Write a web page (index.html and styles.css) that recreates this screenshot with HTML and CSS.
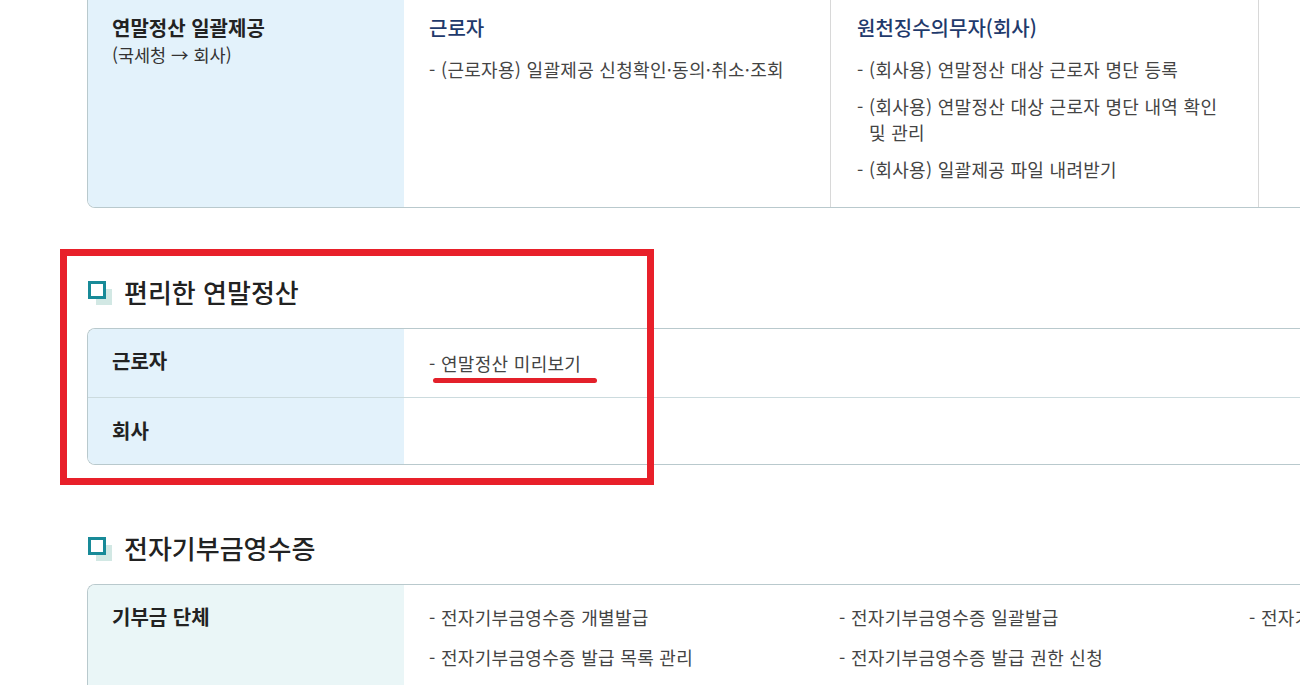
FILE: index.html
```html
<!DOCTYPE html>
<html lang="ko">
<head>
<meta charset="utf-8">
<title>연말정산</title>
<link rel="stylesheet" href="styles.css">
</head>
<body>
<div class="page">
  <div class="tbl tbl-first">
    <div class="th">
      <div class="th-title">연말정산 일괄제공</div>
      <div class="th-sub">(국세청 → 회사)</div>
    </div>
    <div class="td">
      <div class="td-head">근로자</div>
      <ul class="items">
        <li><span class="dash">-</span><span>(근로자용) 일괄제공 신청확인·동의·취소·조회</span></li>
      </ul>
    </div>
    <div class="td td-line">
      <div class="td-head">원천징수의무자(회사)</div>
      <ul class="items">
        <li><span class="dash">-</span><span>(회사용) 연말정산 대상 근로자 명단 등록</span></li>
        <li><span class="dash">-</span><span>(회사용) 연말정산 대상 근로자 명단 내역 확인 및 관리</span></li>
        <li><span class="dash">-</span><span>(회사용) 일괄제공 파일 내려받기</span></li>
      </ul>
    </div>
    <div class="td td-line"></div>
  </div>

  <section class="sec sec-marked">
    <h2 class="sec-title"><span class="sq"></span>편리한 연말정산</h2>
    <div class="tbl2">
      <div class="row">
        <div class="th2">근로자</div>
        <div class="td2">
          <ul class="items">
            <li class="marked"><span class="dash">-</span><span>연말정산 미리보기</span><span class="pen-line"></span></li>
          </ul>
        </div>
      </div>
      <div class="row">
        <div class="th2">회사</div>
        <div class="td2"></div>
      </div>
    </div>
    <div class="red-box"></div>
  </section>

  <section class="sec">
    <h2 class="sec-title"><span class="sq"></span>전자기부금영수증</h2>
    <div class="tbl3">
      <div class="th3">기부금 단체</div>
      <ul class="items grid3">
        <li><span class="dash">-</span><span>전자기부금영수증 개별발급</span></li>
        <li><span class="dash">-</span><span>전자기부금영수증 일괄발급</span></li>
        <li><span class="dash">-</span><span>전자기부금영수증 발급내역 조회</span></li>
        <li><span class="dash">-</span><span>전자기부금영수증 발급 목록 관리</span></li>
        <li><span class="dash">-</span><span>전자기부금영수증 발급 권한 신청</span></li>
      </ul>
    </div>
  </section>
</div>
</body>
</html>
```

FILE: styles.css
```css
html, body {
  margin: 0;
  padding: 0;
  overflow: hidden;
  background: #ffffff;
}

body {
  font-family: "Noto Sans CJK KR", "Noto Sans", sans-serif;
  color: #333333;
  word-break: keep-all;
}

.page {
  padding-left: 87px;
  width: 1700px;
}

ul.items {
  list-style: none;
  margin: 0;
  padding: 0;
}

ul.items li {
  display: flex;
  font-size: 18px;
  line-height: 26px;
  letter-spacing: 0.3px;
  color: #444444;
}

ul.items li + li {
  margin-top: 11px;
}

.dash {
  flex: 0 0 12px;
  width: 12px;
}

/* first table */
.tbl-first {
  display: grid;
  grid-template-columns: 316px 426px 428px 428px;
  border: 1px solid #b9c9cd;
  border-top: 0;
  border-radius: 0 0 0 8px;
  overflow: hidden;
}

.th {
  background: #e3f2fb;
  padding: 14px 24px 25px;
}

.th-title {
  font-size: 20px;
  line-height: 28px;
  font-weight: 700;
  color: #222222;
}

.th-sub {
  font-size: 17.5px;
  line-height: 26px;
  color: #333333;
}

.td {
  padding: 14px 26px 25px 25px;
}

.td-line {
  border-left: 1px solid #d8d8d8;
  padding-left: 26px;
  padding-right: 30px;
}

.td-head {
  font-size: 20px;
  line-height: 28px;
  font-weight: 500;
  color: #1f3a6c;
  margin-bottom: 14px;
}

/* sections */
.sec {
  margin-top: 66px;
}

.sec-marked {
  position: relative;
}

.sec + .sec {
  margin-top: 65px;
}

.sec-title {
  display: flex;
  align-items: center;
  margin: 0 0 18px;
  height: 36px;
  font-size: 26px;
  line-height: 36px;
  font-weight: 500;
  color: #222222;
}

.sq {
  position: relative;
  flex: 0 0 37px;
  height: 26px;
}

.sq::before {
  content: "";
  position: absolute;
  left: 9px;
  top: 10px;
  width: 16px;
  height: 16px;
  background: #d2e8e4;
}

.sq::after {
  content: "";
  position: absolute;
  left: 1px;
  top: 2px;
  width: 12px;
  height: 12px;
  border: 3px solid #188a98;
  background: #ffffff;
}

/* second table */
.tbl2 {
  border: 1px solid #b9c9cd;
  border-right: 0;
  border-radius: 8px 0 0 8px;
  overflow: hidden;
}

.row {
  display: flex;
}

.row + .row {
  border-top: 1px solid #ccdbde;
}

.th2 {
  flex: 0 0 292px;
  background: #e3f2fb;
  padding: 18px 0 0 24px;
  font-size: 20px;
  line-height: 28px;
  font-weight: 700;
  color: #222222;
  height: 50px;
}

.row + .row .th2 {
  padding-top: 19px;
  height: 47px;
}

.td2 {
  flex: 1;
  padding: 21px 25px 0;
}

li.marked {
  position: relative;
}

.pen-line {
  position: absolute;
  left: 4px;
  top: 28px;
  width: 164px;
  height: 5px;
  border-radius: 3px;
  background: #e3202a;
}

.red-box {
  position: absolute;
  left: -27px;
  top: -25px;
  width: 580px;
  height: 222px;
  border: 7px solid #e8202a;
  pointer-events: none;
}

/* third table */
.tbl3 {
  display: flex;
  border: 1px solid #b9c9cd;
  border-right: 0;
  border-bottom: 0;
  border-radius: 8px 0 0 0;
  overflow: hidden;
  min-height: 140px;
}

.th3 {
  flex: 0 0 292px;
  background: #eaf6f7;
  padding: 18px 0 0 24px;
  font-size: 20px;
  line-height: 28px;
  font-weight: 700;
  color: #222222;
}

ul.grid3 {
  display: grid;
  grid-template-columns: 410px 410px 410px;
  row-gap: 14px;
  padding: 19px 0 0 25px;
  align-content: start;
}

ul.grid3 li + li {
  margin-top: 0;
}
```
